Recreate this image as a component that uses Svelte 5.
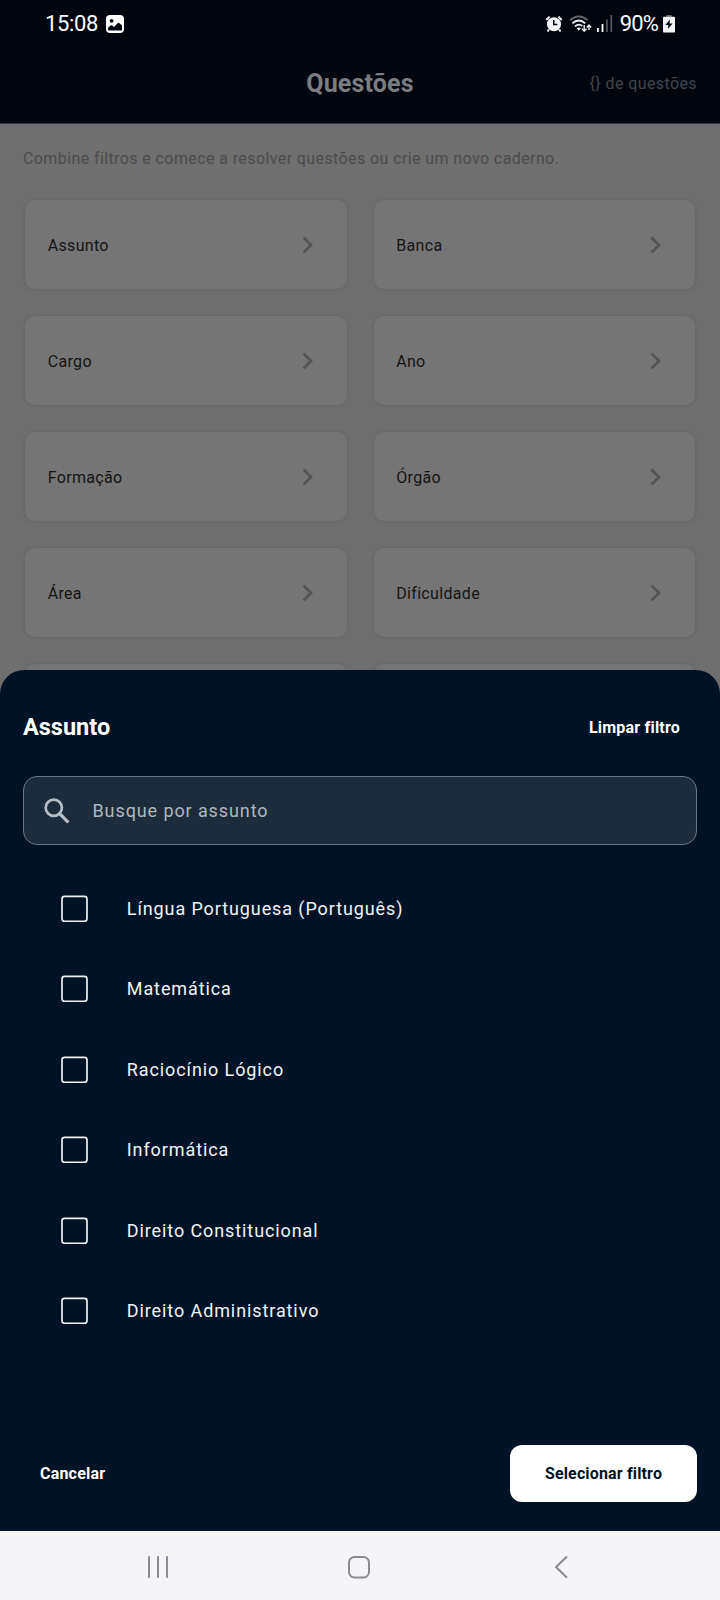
<script>
  const filters = ['Assunto', 'Banca', 'Cargo', 'Ano', 'Formação', 'Órgão', 'Área', 'Dificuldade', '', ''];
  const subjects = [
    'Língua Portuguesa (Português)',
    'Matemática',
    'Raciocínio Lógico',
    'Informática',
    'Direito Constitucional',
    'Direito Administrativo',
  ];
</script>

<div class="screen">
  <header>
    <div class="status">
      <span class="clock">15:08</span>
      <svg class="photo" width="18" height="18" viewBox="0 0 18 18">
        <rect width="18" height="18" rx="4" fill="#fff" />
        <circle cx="5.6" cy="5.8" r="1.9" fill="#000610" />
        <path d="M2 14.7V12.8L4.6 10.5Q5.4 10 6.2 10.6L8 12L11.6 8.2Q12.5 7.4 13.4 8.2L16 10.6V14.7Q16 15.4 15.2 15.4H2.8Q2 15.4 2 14.7Z" fill="#000610" />
      </svg>
      <div class="signals">
        <svg width="18" height="18" viewBox="0 0 18 18">
          <circle cx="9" cy="9.3" r="7" fill="#f3f4f5" />
          <path d="M1.3 5L4.6 1.6M16.7 5L13.4 1.6M3.8 14.4L2.5 16.6M14.2 14.4L15.5 16.6" stroke="#f3f4f5" stroke-width="2" fill="none" />
          <path d="M8.8 5V9.4H12.4" stroke="#000610" stroke-width="1.5" fill="none" />
        </svg>
        <svg class="wifi" width="24" height="18" viewBox="0 0 24 18">
          <g fill="none" stroke-width="1.7">
            <path d="M1 5.2Q9.8-2.6 18.6 5.2" stroke="#626770" />
            <path d="M3.3 8.3Q9.8 2.7 16.3 8.3" stroke="#eceef0" />
            <path d="M5.9 11.4Q9.8 8 13.3 11" stroke="#eceef0" />
          </g>
          <path d="M7.6 13.3Q9.8 11.6 12 13.3L9.8 15.8Z" fill="#eceef0" />
          <path d="M15.2 10V16M12.9 13.8L15.2 16.2L17.5 13.8M20 15V10.4M17.8 12.5L20 10.1L22.2 12.5" stroke="#eceef0" stroke-width="1.4" fill="none" />
        </svg>
        <svg class="bars" width="16" height="17" viewBox="0 0 16 17">
          <path d="M0 13H1.8V17H0ZM4.6 9H6.4V17H4.6Z" fill="#fff" />
          <path d="M9 4.5H10.8V17H9ZM13.4 0H15.2V17H13.4Z" fill="#50555d" />
        </svg>
        <span class="percent">90%</span>
        <svg class="battery" width="12" height="18" viewBox="0 0 12 18">
          <path d="M3.2 0H8.8V2H3.2Z" fill="#62666d" />
          <rect y="1.7" width="12" height="15.8" rx="0.8" fill="#f3f4f5" />
          <path d="M7 4.5L2.3 10H5.4L4.8 14L9.7 8.4H6.5Z" fill="#000610" />
        </svg>
      </div>
    </div>
    <div class="appbar">
      <h1>Questões</h1>
      <span class="count">{'{}'} de questões</span>
    </div>
  </header>

  <main>
    <p>Combine filtros e comece a resolver questões ou crie um novo caderno.</p>
    <div class="grid">
      {#each filters as label}
        <div class="card">
          <span>{label}</span>
          <svg width="12" height="18" viewBox="0 0 12 18">
            <path d="M1.5 1.5L9 9L1.5 16.5" fill="none" stroke="#545454" stroke-width="2.7" />
          </svg>
        </div>
      {/each}
    </div>
  </main>

  <section class="sheet">
    <div class="head">
      <h2>Assunto</h2>
      <button class="clear">Limpar filtro</button>
    </div>
    <div class="search">
      <svg width="26" height="26" viewBox="0 0 26 26">
        <circle cx="9.8" cy="9.8" r="8.1" fill="none" stroke="#b5bec6" stroke-width="2.7" />
        <path d="M15.4 15.4L24.3 24.3" stroke="#b5bec6" stroke-width="3.3" />
      </svg>
      <span>Busque por assunto</span>
    </div>
    <ul>
      {#each subjects as subject}
        <li>
          <svg width="27" height="27" viewBox="0 0 27 27">
            <rect x="1" y="1.3" width="25" height="25" rx="2.6" fill="none" stroke="#edf1f3" stroke-width="1.7" />
          </svg>
          <span>{subject}</span>
        </li>
      {/each}
    </ul>
    <div class="actions">
      <button class="cancel">Cancelar</button>
      <button class="select">Selecionar filtro</button>
    </div>
  </section>

  <nav>
    <svg width="720" height="69" viewBox="0 0 720 69" fill="none" stroke="#8b8b8d" stroke-width="2">
      <path d="M149 26V46M158 26V46M167 26V46" stroke-linecap="round" />
      <rect x="349" y="26" width="20" height="20.5" rx="5.5" />
      <path d="M567 25.5L556 36L567 46.7" />
    </svg>
  </nav>
</div>

<style>
  :global(body) { background: #000; }
  .screen {
    width: 720px;
    height: 1600px;
    display: flex;
    flex-direction: column;
    overflow: hidden;
    background: #6f6f6f;
    font-family: Roboto, "Liberation Sans", sans-serif;
  }
  h1, h2, p, ul { margin: 0; padding: 0; font-weight: 400; }
  svg { display: block; flex: none; }
  span, h1, h2, p, button { white-space: nowrap; }
  button { font: inherit; border: 0; background: none; padding: 0; }

  header {
    box-sizing: border-box;
    height: 124px;
    flex: none;
    background: #000610;
    border-bottom: 1px solid #303841;
    color: #fff;
  }
  .status { display: flex; align-items: center; height: 47px; padding: 0 45px 0 45px; font-size: 22px; }
  .clock { letter-spacing: -0.35px; }
  .photo { margin-left: 8px; }
  .signals { margin-left: auto; display: flex; align-items: center; }
  .wifi { margin-left: 6px; }
  .bars { margin-left: 4px; }
  .percent { margin-left: 7px; letter-spacing: -0.9px; }
  .battery { margin-left: 5px; }
  .appbar { display: grid; grid-template-columns: 1fr auto 1fr; align-items: center; height: 72px; padding: 1px 23px 0; }
  h1 { grid-column: 2; font-size: 25px; line-height: 30px; font-weight: 700; letter-spacing: 0.15px; color: #7b7d80; }
  .count { justify-self: end; padding-bottom: 2px; font-size: 16px; letter-spacing: 0.4px; color: #40444b; }

  main { height: 546px; flex: none; overflow: hidden; padding: 0 23px 24px; }
  p { font-size: 16px; line-height: 20px; padding: 25px 0 29px; letter-spacing: 0.4px; color: #4c4c4c; }
  .grid { display: grid; grid-template-columns: 1fr 1fr; gap: 23px; }
  .card {
    box-sizing: border-box;
    height: 93px;
    display: flex;
    align-items: center;
    justify-content: space-between;
    padding: 0 33px 0 22.7px;
    border: 2px solid #6b6b6b;
    border-radius: 12px;
    background: #757575;
    color: #141414;
    font-size: 16px;
    letter-spacing: 0.33px;
  }
  .card span { padding-top: 1px; }

  .sheet {
    height: 861px;
    flex: none;
    display: flex;
    flex-direction: column;
    box-sizing: border-box;
    margin-top: -24px;
    padding: 0 23px 29px;
    background: #001326;
    border-radius: 24px 24px 0 0;
    color: #fff;
  }
  .head { display: flex; align-items: center; justify-content: space-between; height: 106px; padding-top: 8px; box-sizing: border-box; }
  h2 { font-size: 23.5px; font-weight: 700; }
  .clear { font-size: 16px; font-weight: 700; letter-spacing: 0.2px; color: #fff; margin-right: 17px; }
  .search {
    box-sizing: border-box;
    height: 69px;
    display: flex;
    align-items: center;
    gap: 22.5px;
    padding-left: 20px;
    border: 1.5px solid #6a7885;
    border-radius: 14px;
    background: #1c2c3d;
    font-size: 18px;
    letter-spacing: 0.9px;
    color: #aeb7bf;
  }
  .search span { margin-bottom: 1px; }
  ul { list-style: none; margin-top: 23px; }
  li { display: flex; align-items: center; gap: 38.8px; height: 80.5px; padding-left: 38px; font-size: 18px; letter-spacing: 0.9px; color: #f1f4f6; }
  .actions { display: flex; align-items: center; justify-content: space-between; margin-top: auto; }
  .cancel { margin-left: 17px; padding-bottom: 1px; font-size: 16px; font-weight: 700; letter-spacing: 0.2px; color: #fff; }
  .select { width: 187px; height: 57px; padding-bottom: 1px; border-radius: 12px; background: #fff; color: #001326; font-size: 16px; font-weight: 700; letter-spacing: 0.15px; }
  nav { height: 69px; flex: none; background: #f5f5f7; }
</style>
